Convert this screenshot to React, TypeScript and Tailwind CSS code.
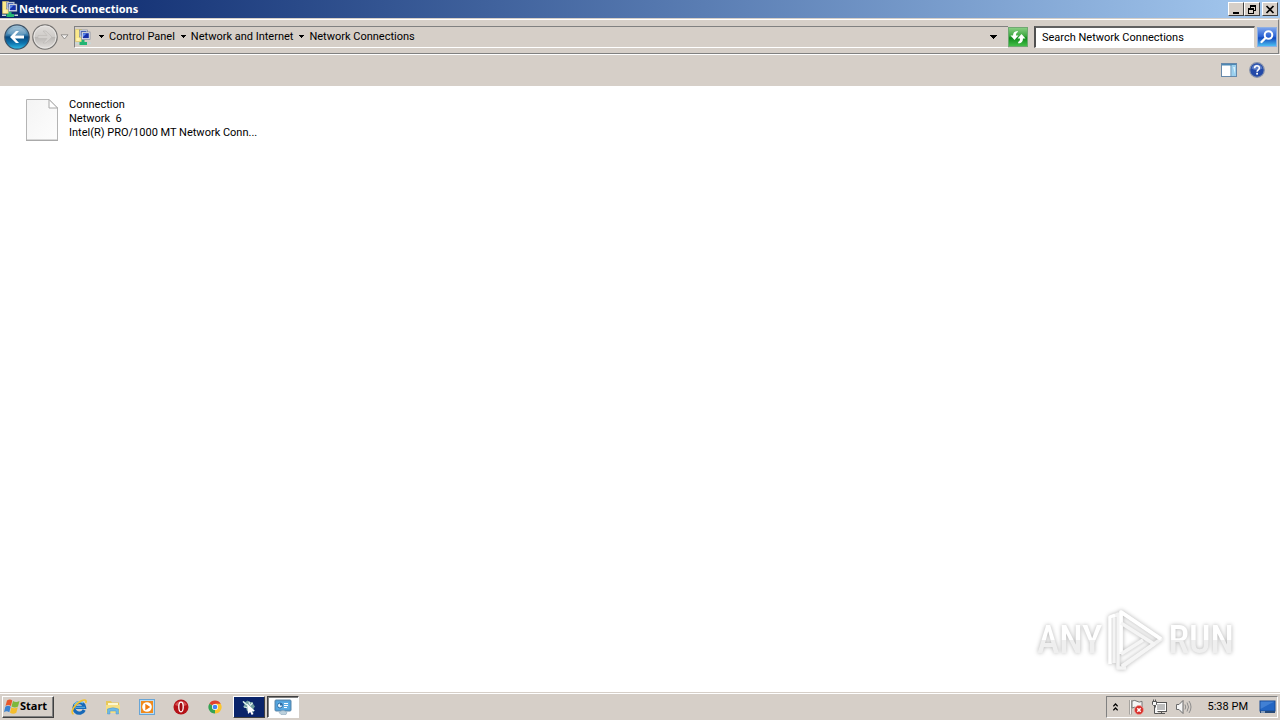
import React from "react";

function NetworkIcon({ className }: { className?: string }) {
  return (
    <svg viewBox="0 0 16 16" className={className} aria-hidden="true">
      <path d="M.5.500h6l1 1v11h-7z" fill="#fbe98a" stroke="#d8c468" strokeWidth=".6" />
      <path d="M1.500 9h3v3h-3z" fill="#fff3b0" />
      <rect x="4.500" y="1" width="8" height="7" fill="#dfe5f0" stroke="#6c7890" strokeWidth=".6" />
      <rect x="5.700" y="2.200" width="5.600" height="4.500" fill="#1b3fc0" />
      <rect x="6.500" y="3" width="8.500" height="7.500" fill="#eef1f6" stroke="#6c7890" strokeWidth=".6" />
      <rect x="7.800" y="4.200" width="6" height="5" fill="#1630a8" />
      <path d="M8 4.500h3.500L8 8z" fill="#5c8cf0" />
      <path d="M6.500 11h3v2h2.500v3H4.500v-3h2z" fill="#22b573" />
      <path d="M0 13.500h4v1.500H0zM12.500 13.500H16v1.500h-3.500z" fill="#c7d8d8" />
    </svg>
  );
}

function Caret({ className }: { className?: string }) {
  return (
    <svg viewBox="0 0 7 4" className={className} aria-hidden="true" shapeRendering="crispEdges">
      <path d="M0 0h7L3.500 4z" fill="#000" />
    </svg>
  );
}

function BackIcon() {
  return (
    <svg viewBox="0 0 26 26" className="size-[26px]" aria-hidden="true">
      <defs>
        <linearGradient id="back" x1="0" y1="0" x2="0" y2="1">
          <stop offset="0" stopColor="#a9c6d8" />
          <stop offset=".42" stopColor="#3a7fae" />
          <stop offset=".5" stopColor="#07497f" />
          <stop offset=".75" stopColor="#0e74ae" />
          <stop offset="1" stopColor="#35c0ea" />
        </linearGradient>
      </defs>
      <circle cx="13" cy="13" r="12.200" fill="url(#back)" stroke="#3d5266" strokeWidth="1.200" />
      <path d="M3.500 9.500a10 8.500 0 0 1 19 0q-9.500 4-19 0z" fill="#fff" opacity=".18" />
      <path d="M6 13l6-6h3l-4 4.500h9v3h-9l4 4.500h-3z" fill="#fff" />
    </svg>
  );
}

function ForwardIcon() {
  return (
    <svg viewBox="0 0 26 26" className="size-[26px]" aria-hidden="true">
      <defs>
        <linearGradient id="fwd" x1="0" y1="0" x2="0" y2="1">
          <stop offset="0" stopColor="#e2dfdc" />
          <stop offset=".48" stopColor="#cfccc9" />
          <stop offset=".52" stopColor="#bbb8b5" />
          <stop offset="1" stopColor="#e4e1de" />
        </linearGradient>
      </defs>
      <circle cx="13" cy="13" r="12.200" fill="url(#fwd)" stroke="#777573" strokeWidth="1.200" />
      <circle cx="13" cy="13" r="11" fill="none" stroke="#e9e7e5" strokeWidth="1" />
      <path d="M20 13l-6-6h-3l4 4.500H6v3h9l-4 4.500h3z" fill="#d3d0cd" stroke="#bcb9b6" strokeWidth=".6" />
    </svg>
  );
}

function RefreshIcon() {
  return (
    <svg viewBox="0 0 20 20" className="size-5" aria-hidden="true">
      <defs>
        <linearGradient id="ref" x1="0" y1="0" x2="0" y2="1">
          <stop offset="0" stopColor="#8ccf86" />
          <stop offset=".45" stopColor="#3ca840" />
          <stop offset=".55" stopColor="#0f8a1c" />
          <stop offset="1" stopColor="#46c24a" />
        </linearGradient>
      </defs>
      <rect x=".5" y=".5" width="19" height="19" fill="url(#ref)" stroke="#6fa872" />
      <path d="M9.500 4C6.500 4.200 5 5.800 5 8.500H2.500l4 4.500 4-4.500H8c0-2 .5-3 2-3.500z" fill="#fff" />
      <path d="M10.500 16.500c3.200-.3 4.500-2.300 4.500-5h2.500l-4-4.500-4 4.500H12c0 2-.4 3-2 3.600z" fill="#fff" />
    </svg>
  );
}

function SearchIcon() {
  return (
    <svg viewBox="0 0 20 20" className="size-5" aria-hidden="true">
      <defs>
        <linearGradient id="sea" x1="0" y1="0" x2="0" y2="1">
          <stop offset="0" stopColor="#7fa6ec" />
          <stop offset=".48" stopColor="#2a62d4" />
          <stop offset=".55" stopColor="#1249bd" />
          <stop offset="1" stopColor="#4fc4f4" />
        </linearGradient>
      </defs>
      <rect x=".5" y=".5" width="19" height="19" fill="url(#sea)" stroke="#8fb0e4" />
      <circle cx="11.500" cy="8" r="3.800" fill="none" stroke="#fff" strokeWidth="2" />
      <path d="M8.500 11l-4 4" stroke="#fff" strokeWidth="2.400" strokeLinecap="round" />
    </svg>
  );
}

function WindowControls() {
  const base =
    "flex h-3.5 w-4 items-center justify-center border border-t-white border-l-white border-r-[#404040] border-b-[#404040] bg-[#d6cfc8]";
  return (
    <div className="flex items-center">
      <button type="button" aria-label="Minimize" className={base}>
        <svg viewBox="0 0 12 11" className="h-[11px] w-3" shapeRendering="crispEdges"><path d="M3 8h6v2H3z" /></svg>
      </button>
      <button type="button" aria-label="Restore" className={base}>
        <svg viewBox="0 0 12 11" className="h-[11px] w-3" shapeRendering="crispEdges">
          <path d="M4 1h6v6H8V6h1V3H5v1H4zM2 4h6v6H2zM3 6v3h4V6z" fillRule="evenodd" />
        </svg>
      </button>
      <button type="button" aria-label="Close" className={base + " ml-0.5"}>
        <svg viewBox="0 0 12 11" className="h-[11px] w-3"><path d="M2.500 2l7 7M9.500 2l-7 7" stroke="#000" strokeWidth="1.700" /></svg>
      </button>
    </div>
  );
}

function TitleBar() {
  return (
    <header className="flex h-[18px] items-center bg-linear-to-r from-[#0a246a] to-[#a6caf0] pr-0.5 pl-0.5">
      <NetworkIcon className="size-4" />
      <h1 className="ml-px flex-1 font-['Noto_Sans','Liberation_Sans',sans-serif] text-[11px] leading-4 font-bold text-white">
        Network Connections
      </h1>
      <WindowControls />
    </header>
  );
}

const crumbs = ["Control Panel", "Network and Internet", "Network Connections"];

function NavigationBar() {
  return (
    <div className="mt-px mr-px flex h-[35px] items-center border-t border-r border-b border-t-white border-r-[#808080] border-b-[#808080] pr-px pl-1">
      <button type="button" aria-label="Back"><BackIcon /></button>
      <button type="button" aria-label="Forward" className="ml-0.5"><ForwardIcon /></button>
      <button type="button" aria-label="Recent pages" className="ml-0.5">
        <svg viewBox="0 0 9 6" className="h-1.5 w-[9px]"><path d="M1 .8h7L4.500 5z" fill="#f4f2f0" stroke="#8c8986" strokeWidth=".9" /></svg>
      </button>
      <nav
        aria-label="Address"
        className="ml-[5px] flex h-[22px] flex-1 items-center border-t border-b border-l border-t-[#808080] border-b-white border-l-[#808080]"
      >
        <NetworkIcon className="size-4" />
        <ol className="ml-1.5 flex flex-1 items-center">
          {crumbs.map((c) => (
            <li key={c} className="flex items-center">
              <Caret className="mr-[5px] ml-0.5 h-[3px] w-[5px]" />
              <a href="#" className="pr-1 text-[11px] leading-4">{c}</a>
            </li>
          ))}
        </ol>
        <button type="button" aria-label="Previous locations" className="mr-[11px]"><Caret className="h-1 w-[7px]" /></button>
      </nav>
      <button type="button" aria-label="Refresh"><RefreshIcon /></button>
      <input
        type="text"
        aria-label="Search Network Connections"
        placeholder="Search Network Connections"
        className="ml-1.5 h-[22px] w-[221px] rounded-none border-t-2 border-r border-b border-l-2 border-t-[#606060] border-r-[#d6cfc8] border-b-white border-l-[#505050] bg-white pl-1.5 text-[11px] placeholder:text-black"
      />
      <button type="button" aria-label="Search" className="ml-0.5"><SearchIcon /></button>
    </div>
  );
}

function CommandBar() {
  return (
    <div className="flex h-8 items-center justify-end gap-3 border-t border-white pr-[15px] pb-0.5">
      <button type="button" aria-label="Show the preview pane">
        <svg viewBox="0 0 16 14" className="h-3.5 w-4">
          <rect x=".5" y=".5" width="15" height="13" fill="#fff" stroke="#6688aa" />
          <path d="M1 1h14v1.500H1z" fill="#4c88b4" />
          <rect x="10.500" y="2" width="4.500" height="11" fill="#9bd0ee" />
          <path d="M10 2v11.500" stroke="#4c88b4" />
          <path d="M12 4l2 0v7z" fill="#d7effb" />
        </svg>
      </button>
      <button type="button" aria-label="Help">
        <svg viewBox="0 0 16 16" className="size-4">
          <circle cx="8" cy="8" r="7.300" fill="#2349a8" stroke="#8793ad" strokeWidth="1.200" />
          <path d="M2.500 6.500a5.600 5 0 0 1 11 0q-5.500 3-11 0z" fill="#7f9ddb" opacity=".6" />
          <path d="M5.600 6.200C5.600 3 10.400 3.100 10.400 6c0 1.800-2.300 1.900-2.300 3.700" fill="none" stroke="#fff" strokeWidth="1.600" />
          <rect x="7.200" y="10.800" width="1.800" height="1.800" fill="#fff" />
        </svg>
      </button>
    </div>
  );
}

function ConnectionItem() {
  return (
    <a href="#" className="flex w-64 items-start gap-2.5">
      <svg viewBox="0 0 34 44" className="h-11 w-[34px] shrink-0" aria-hidden="true">
        <defs>
          <linearGradient id="page" x1="0" y1="0" x2="1" y2="1">
            <stop offset="0" stopColor="#f4f4f4" />
            <stop offset="1" stopColor="#fdfdfd" />
          </linearGradient>
        </defs>
        <path d="M1.500 1.500h22.500l8.500 8.500v32h-31z" fill="url(#page)" stroke="#b4b4b4" />
        <path d="M1 42.500h32" stroke="#aaa" />
        <path d="M24 1.500v8.500h8.500z" fill="#fff" stroke="#a8a8a8" />
      </svg>
      <span className="min-w-0 text-[11px] leading-[14px]">
        <span className="block">Connection</span>
        <span className="block whitespace-pre">Network  6</span>
        <span className="block whitespace-nowrap">Intel(R) PRO/1000 MT Network Conn...</span>
      </span>
    </a>
  );
}

function Watermark() {
  const word =
    "bg-linear-to-b from-white from-50% to-[#efefef] to-50% bg-clip-text font-['Roboto_Condensed','Roboto',sans-serif] text-[38px] leading-10 font-medium text-transparent";
  return (
    <div className="absolute right-[46px] bottom-5 flex items-center gap-1 drop-shadow-[0_0_2px_rgba(0,0,0,0.3)]">
      <span className={word}>ANY</span>
      <svg viewBox="0 0 58 64" className="h-16 w-[58px]" aria-hidden="true">
        <g fill="none" strokeWidth="3.500" strokeLinejoin="round">
          <path d="M8 55V8l4-2v54l8 0" stroke="#f4f4f4" />
          <path d="M4 56V9l5-2" stroke="#fff" />
          <path d="M15 46V4l40 27-39 28" stroke="#f1f1f1" />
          <path d="M15 46V4l40 27" stroke="#fff" />
          <path d="M15 15l33 21-32 22M15 46l22-14" stroke="#f5f5f5" />
        </g>
      </svg>
      <span className={word}>RUN</span>
    </div>
  );
}

function StartButton() {
  return (
    <button
      type="button"
      className="flex h-[22px] w-[52px] items-center border border-t-white border-r-[#404040] border-b-[#404040] border-l-white pl-px font-['Noto_Sans','Liberation_Sans',sans-serif] text-[11px] font-bold shadow-[inset_-1px_-1px_0_#808080]"
    >
      <svg viewBox="0 0 16 15" className="h-[15px] w-4 shrink-0" aria-hidden="true">
        <path d="M3 1.500q3-2 5.300 0L6.900 7q-2.800-2-5.400 0z" fill="#e8582a" />
        <path d="M9 2q3 2 6.500 0L14 7.500q-3 2-6.500 0z" fill="#7db83c" />
        <path d="M1.300 7.800q3-2 5.400 0L5.300 13.300q-2.700-2-5.300 0z" fill="#3b82d0" />
        <path d="M7.400 8.300q3 2 6.400 0L12.300 13.800q-3 2-6.300 0z" fill="#f5bd2c" />
      </svg>
      Start
    </button>
  );
}

function QuickLaunch() {
  const slot = "flex h-[22px] w-[34px] items-center justify-center";
  return (
    <div className="ml-2 flex items-center">
      <button type="button" aria-label="Internet Explorer" className={slot}>
        <svg viewBox="0 0 16 16" className="size-4">
          <path d="M13.200 11A5.300 5.300 0 1 1 13.600 8.300H5" fill="none" stroke="#1769b8" strokeWidth="3.200" />
          <path d="M3.500 6a5.500 5.500 0 0 1 8.500-2" fill="none" stroke="#6cc4f4" strokeWidth="1.600" />
          <path d="M5 8.300h9" stroke="#59b4ea" strokeWidth="1" />
          <path d="M2.500 15.200C-1.500 13.500 4 4.500 10.500 1.700c3.800-1.600 5.300-.2 4.200 2.300" fill="none" stroke="#f2c230" strokeWidth="1.700" />
        </svg>
      </button>
      <button type="button" aria-label="Windows Explorer" className={slot}>
        <svg viewBox="0 0 16 16" className="size-4">
          <path d="M1 2h5l1 1.500h7V13H1z" fill="#e8c85a" />
          <path d="M3 4h10v8H3z" fill="#fdf7cf" />
          <path d="M1 6h14v8H1z" fill="#f6df83" />
          <path d="M2.500 15v-5q5.500-2.500 11 0v5h-2.500v-3H5v3z" fill="#6db9e6" stroke="#4d97c8" strokeWidth=".5" />
        </svg>
      </button>
      <button type="button" aria-label="Windows Media Player" className={slot}>
        <svg viewBox="0 0 16 16" className="size-4">
          <rect x=".5" y=".5" width="15" height="15" fill="#b9dcf5" stroke="#68a5d6" />
          <rect x="2" y="2" width="12" height="12" fill="#f08a1d" />
          <circle cx="8" cy="8" r="4.800" fill="#fff" />
          <path d="M6.300 4.800l5 3.200-5 3.200z" fill="#f07a10" />
        </svg>
      </button>
      <button type="button" aria-label="Opera" className={slot}>
        <svg viewBox="0 0 16 16" className="size-4">
          <circle cx="8" cy="8" r="7.500" fill="#b51218" />
          <path d="M2 6a6.300 5.500 0 0 1 12 0q-6 2.500-12 0z" fill="#e36a68" opacity=".7" />
          <ellipse cx="8" cy="8" rx="2.200" ry="4.800" fill="#a00c12" stroke="#fff" strokeWidth="1.300" />
        </svg>
      </button>
      <button type="button" aria-label="Chrome" className={slot}>
        <svg viewBox="0 0 16 16" className="size-3.5">
          <path d="M8 8L1.500 4.200A7.500 7.500 0 0 1 14.500 4.200z" fill="#e0412f" />
          <path d="M8 8L1.500 4.200A7.500 7.500 0 0 0 8 15.500z" fill="#34a353" />
          <path d="M8 8L8 15.500A7.500 7.500 0 0 0 14.500 4.200H8z" fill="#fbc52c" />
          <circle cx="8" cy="8" r="3.500" fill="#fff" />
          <circle cx="8" cy="8" r="2.700" fill="#4285f4" />
        </svg>
      </button>
    </div>
  );
}

function TaskButtons() {
  return (
    <div className="ml-px flex items-center gap-0.5">
      <button
        type="button"
        aria-label="Process tool"
        className="flex h-[22px] w-8 items-center justify-center border border-t-white border-r-[#404040] border-b-[#404040] border-l-white bg-[#0a246a]"
      >
        <svg viewBox="0 0 16 16" className="size-4">
          <path d="M1.500 2l3 1 2-1.500 2 1.500h3l1 2.500 1.500 2-1.500 2 .5 4-4-2-3 .5-1-3-3-1 1.500-2.500z" fill="#6f9c9e" />
          <path d="M2 2.500l4 3.500M8 2.500l.5 3M3 8l3 .5M11.500 4L9 6.500" stroke="#e3f3f1" strokeWidth="1.200" />
          <path d="M6 4.500l8 7.500-3 .3 1.500 2.700-1.800.9-1.500-2.900L7 15z" fill="#fff" />
        </svg>
      </button>
      <button
        type="button"
        aria-label="Network Connections"
        className="flex h-[22px] w-8 items-center justify-center border border-t-[#404040] border-r-white border-b-white border-l-[#404040] bg-white shadow-[inset_1px_1px_0_#808080]"
      >
        <svg viewBox="0 0 18 16" className="h-4 w-[18px]">
          <rect x="1" y="1" width="16" height="11" rx="1" fill="#4a9bd6" stroke="#5c86a8" />
          <rect x="2.500" y="2.500" width="13" height="8" fill="#5aaae2" />
          <circle cx="6" cy="6.500" r="2.500" fill="#e8f5fd" stroke="#2b6da8" />
          <path d="M6 6.500V4A2.500 2.500 0 0 1 8.500 6.500z" fill="#2b6da8" />
          <path d="M10 4.500h4M10 6.500h4M10 8.500h3" stroke="#fff" />
          <path d="M5 13.500q4-4 8 0l-1 2H7z" fill="#bcd0dc" stroke="#8ca6b8" strokeWidth=".6" />
        </svg>
      </button>
    </div>
  );
}

function Tray() {
  return (
    <div className="ml-auto flex h-[22px] items-center border border-t-[#808080] border-r-white border-b-white border-l-[#808080] pr-px pl-1.5">
      <button type="button" aria-label="Show hidden icons">
        <svg viewBox="0 0 5 8" className="h-2 w-[5px]"><path d="M.3 3.300L2.500 1l2.200 2.300M.3 7.300L2.500 5l2.200 2.300" fill="none" stroke="#000" strokeWidth="1.300" /></svg>
      </button>
      <button type="button" aria-label="Action Center" className="ml-2.5">
        <svg viewBox="0 0 17 16" className="h-4 w-[17px]">
          <path d="M2.500 1v14.500" stroke="#777" strokeWidth="2" />
          <path d="M2.500 1v14.500" stroke="#f5f5f5" />
          <path d="M4 2q3-1.300 5 .3t5 0v7q-3 1.300-5-.3T4 9z" fill="#f4f4f4" stroke="#777" />
          <circle cx="11" cy="11" r="4.500" fill="#d6302c" stroke="#f0a09a" strokeWidth=".7" />
          <path d="M9.300 9.300l3.400 3.400M12.700 9.300l-3.400 3.400" stroke="#fff" strokeWidth="1.500" />
        </svg>
      </button>
      <button type="button" aria-label="Network" className="ml-1.5">
        <svg viewBox="0 0 17 16" className="h-4 w-[17px]" fill="#d9d9d9" stroke="#555">
          <rect x="4.500" y="3.500" width="11" height="9" fill="#fff" />
          <rect x="6" y="5" width="8" height="6" fill="#bdbdbd" stroke="none" />
          <path d="M7 14.500h7M10.500 12.500v2" />
          <path d="M1.500 2.500h4v3l-1 1h-2l-1-1zM2.500.5v2M4.500.5v2M3.500 6.500v8h4" fill="#f5f5f5" />
        </svg>
      </button>
      <button type="button" aria-label="Volume" className="ml-[7px]">
        <svg viewBox="0 0 17 16" className="h-4 w-[17px]" fill="none" stroke="#6a6a6a">
          <path d="M1.500 5.500h2.500L8 1.500v13L4 10.500H1.500z" fill="#f5f5f5" />
          <path d="M10 5.500q1.500 2.500 0 5M12 3.500q3 4.500 0 9M14 2q4 6 0 12" stroke="#8c8c8c" />
        </svg>
      </button>
      <time className="ml-4 text-[11px] leading-4">5:38 PM</time>
      <button type="button" aria-label="Show desktop" className="ml-[11px]">
        <svg viewBox="0 0 17 14" className="h-3.5 w-[17px]">
          <rect x="1" y="1" width="15" height="10" fill="#2366c4" stroke="#174a94" />
          <path d="M1.500 1.500h14L1.500 9z" fill="#5f9ae4" opacity=".5" />
          <path d="M1 11h15v2H1z" fill="#274a78" />
          <path d="M2 11.500h4v1H2z" fill="#e8f0fa" />
        </svg>
      </button>
    </div>
  );
}

export default function App() {
  return (
    <div className="flex min-h-screen flex-col bg-[#d6cfc8] font-['Roboto','Liberation_Sans',sans-serif] text-black">
      <TitleBar />
      <NavigationBar />
      <CommandBar />
      <main className="relative flex-1 bg-white px-[25px] pt-3">
        <ConnectionItem />
        <Watermark />
      </main>
      <footer className="flex h-7 items-center border-t border-[#d6cfc8] px-0.5 shadow-[inset_0_1px_0_#fff]">
        <StartButton />
        <QuickLaunch />
        <TaskButtons />
        <Tray />
      </footer>
    </div>
  );
}
